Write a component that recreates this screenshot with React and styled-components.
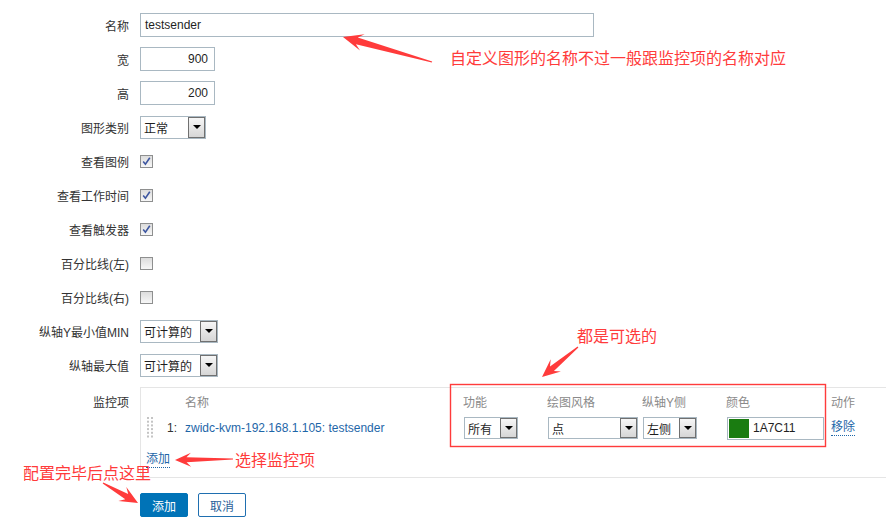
import React from 'react'
import styled, { createGlobalStyle } from 'styled-components'

const RED = '#ff3b3b'

const GlobalStyle = createGlobalStyle`
    html, body {
        margin: 0;
        padding: 0;
        background: #fff;
    }
    body {
        font-family: "Liberation Sans", Arial, "Noto Sans CJK SC", sans-serif;
        font-size: 12px;
        color: #333;
    }
`

// tapered annotation arrow: thin tail, wide swept head
const arrowPoints = (x1, y1, x2, y2, hl, hw, sw) => {
    const dx = x2 - x1
    const dy = y2 - y1
    const len = Math.hypot(dx, dy)
    const ux = dx / len
    const uy = dy / len
    const nx = -uy
    const ny = ux
    const jx = x2 - ux * hl * 0.72
    const jy = y2 - uy * hl * 0.72
    const bx = x2 - ux * hl
    const by = y2 - uy * hl
    return [
        [x1 + nx * 0.6, y1 + ny * 0.6],
        [jx + (nx * sw) / 2, jy + (ny * sw) / 2],
        [bx + (nx * hw) / 2, by + (ny * hw) / 2],
        [x2, y2],
        [bx - (nx * hw) / 2, by - (ny * hw) / 2],
        [jx - (nx * sw) / 2, jy - (ny * sw) / 2],
        [x1 - nx * 0.6, y1 - ny * 0.6],
    ]
        .map(p => p.map(v => v.toFixed(1)).join(','))
        .join(' ')
}

const arrows = [
    [432, 62, 343, 37, 20, 17, 7],
    [233, 459, 175, 460, 16, 14, 5],
    [103, 483, 138, 503, 18, 16, 6],
    [578, 347, 542, 377, 18, 16, 6],
]

const notes = [
    { x: 450, y: 49, text: '自定义图形的名称不过一般跟监控项的名称对应' },
    { x: 577, y: 327, text: '都是可选的' },
    { x: 235, y: 451, text: '选择监控项' },
    { x: 23, y: 464, text: '配置完毕后点这里' },
]

const Select = ({ value, width, height = 23 }) => (
    <SelectBox width={width} height={height}>
        <SelectText>{value}</SelectText>
        <SelectButton>
            <Caret />
        </SelectButton>
    </SelectBox>
)

const Checkbox = ({ checked }) => (
    <CheckBox>
        {checked && (
            <svg width="11" height="11" viewBox="0 0 11 11">
                <path d="M2.2 5.6 L4.4 8.2 L8.8 1.8" fill="none" stroke="#3d56a0" strokeWidth="1.6" />
            </svg>
        )}
    </CheckBox>
)

const DragHandle = () => (
    <svg width="7" height="22" viewBox="0 0 7 22">
        {[0, 1, 2, 3, 4, 5].map(r =>
            [0, 4].map(c => <rect key={`${r}-${c}`} x={c} y={r * 3.7} width="2" height="2" fill="#c4c4c4" />)
        )}
    </svg>
)

const App = () => {
    return (
        <Page>
            <GlobalStyle />
            <Form>
                <Row>
                    <Label>名称</Label>
                    <TextInput width={454}>testsender</TextInput>
                </Row>
                <Row>
                    <Label>宽</Label>
                    <TextInput width={75} right>900</TextInput>
                </Row>
                <Row>
                    <Label>高</Label>
                    <TextInput width={75} right>200</TextInput>
                </Row>
                <Row>
                    <Label>图形类别</Label>
                    <Select value="正常" width={66} />
                </Row>
                <Row>
                    <Label>查看图例</Label>
                    <Checkbox checked />
                </Row>
                <Row>
                    <Label>查看工作时间</Label>
                    <Checkbox checked />
                </Row>
                <Row>
                    <Label>查看触发器</Label>
                    <Checkbox checked />
                </Row>
                <Row>
                    <Label>百分比线(左)</Label>
                    <Checkbox />
                </Row>
                <Row>
                    <Label>百分比线(右)</Label>
                    <Checkbox />
                </Row>
                <Row>
                    <Label>纵轴Y最小值MIN</Label>
                    <Select value="可计算的" width={78} />
                </Row>
                <Row>
                    <Label>纵轴最大值</Label>
                    <Select value="可计算的" width={78} />
                </Row>
                <ItemsRow>
                    <Label top>监控项</Label>
                    <ItemsPanel>
                        <ItemsGrid>
                            <HeadCell />
                            <HeadCell />
                            <HeadCell>名称</HeadCell>
                            <HeadCell>功能</HeadCell>
                            <HeadCell>绘图风格</HeadCell>
                            <HeadCell>纵轴Y侧</HeadCell>
                            <HeadCell>颜色</HeadCell>
                            <HeadCell>动作</HeadCell>

                            <Cell><DragHandle /></Cell>
                            <Cell>1:</Cell>
                            <Cell><ItemLink>zwidc-kvm-192.168.1.105: testsender</ItemLink></Cell>
                            <Cell><Select value="所有" width={54} height={22} /></Cell>
                            <Cell><Select value="点" width={90} height={22} /></Cell>
                            <Cell><Select value="左侧" width={54} height={22} /></Cell>
                            <Cell>
                                <ColorInput>
                                    <Swatch color="#1A7C11" />
                                    1A7C11
                                </ColorInput>
                            </Cell>
                            <Cell><DottedLink>移除</DottedLink></Cell>
                        </ItemsGrid>
                        <AddRow>
                            <DottedLink>添加</DottedLink>
                        </AddRow>
                    </ItemsPanel>
                </ItemsRow>
                <ButtonRow>
                    <Spacer />
                    <Buttons>
                        <Button primary>添加</Button>
                        <Button>取消</Button>
                    </Buttons>
                </ButtonRow>
            </Form>

            <Overlay>
                <svg width="886" height="521" viewBox="0 0 886 521">
                    <rect x="450.5" y="384.5" width="375" height="62" fill="none" stroke={RED} strokeWidth="1.4" />
                    {arrows.map((a, i) => (
                        <polygon key={i} points={arrowPoints(...a)} fill={RED} />
                    ))}
                </svg>
                {notes.map(n => (
                    <Note key={n.text} style={{ left: n.x, top: n.y }}>{n.text}</Note>
                ))}
            </Overlay>
        </Page>
    )
}

export default App

const Page = styled.div`
    position: relative;
    width: 886px;
    height: 521px;
    overflow: hidden;
`

const Form = styled.div`
    display: flex;
    flex-direction: column;
    padding-top: 8px;
`

const Row = styled.div`
    display: grid;
    grid-template-columns: 130px 1fr;
    column-gap: 10px;
    height: 34px;
    align-items: center;
`

const Label = styled.div`
    text-align: right;
    white-space: nowrap;
    color: #333;
    align-self: ${props => (props.top ? 'start' : 'center')};
    padding-top: ${props => (props.top ? '6px' : '0')};
    padding-right: 1px;
`

const TextInput = styled.div`
    box-sizing: border-box;
    width: ${props => props.width}px;
    height: 24px;
    line-height: 22px;
    border: 1px solid #a9b8c2;
    padding: 0 6px 0 4px;
    text-align: ${props => (props.right ? 'right' : 'left')};
    color: #1f1f1f;
`

const SelectBox = styled.div`
    box-sizing: border-box;
    width: ${props => props.width}px;
    height: ${props => props.height}px;
    border: 1px solid #a9b8c2;
    display: flex;
    align-items: stretch;
    justify-content: space-between;
    background: #fff;
`

const SelectText = styled.span`
    display: flex;
    align-items: center;
    padding-left: 3px;
    color: #1f1f1f;
    white-space: nowrap;
`

const SelectButton = styled.span`
    box-sizing: border-box;
    width: 17px;
    margin: 0 0 0 0;
    border: 1px solid #707070;
    background: linear-gradient(#f6f6f6, #d6d6d6);
    display: flex;
    align-items: center;
    justify-content: center;
`

const Caret = styled.span`
    width: 0;
    height: 0;
    border-left: 4px solid transparent;
    border-right: 4px solid transparent;
    border-top: 4px solid #000;
`

const CheckBox = styled.span`
    box-sizing: border-box;
    width: 13px;
    height: 13px;
    border: 1px solid #8e8f8f;
    background: linear-gradient(#dcdcdc, #f7f7f7);
    display: flex;
    align-items: center;
    justify-content: center;
`

const ItemsRow = styled.div`
    display: grid;
    grid-template-columns: 130px 1fr;
    column-gap: 10px;
    margin-top: 5px;
`

const ItemsPanel = styled.div`
    border-top: 1px solid #e5e5e5;
    border-left: 1px solid #e5e5e5;
    border-bottom: 1px solid #e5e5e5;
    padding-left: 6px;
`

const ItemsGrid = styled.div`
    display: grid;
    grid-template-columns: 20px 18px 278px 84px 95px 84px 105px 1fr;
    grid-template-rows: 26px 28px;
    align-items: center;
`

const HeadCell = styled.div`
    color: #8a8a8a;
    white-space: nowrap;
`

const Cell = styled.div`
    display: flex;
    align-items: center;
    white-space: nowrap;
    color: #333;
    padding-left: ${props => (props.pad ? props.pad : 0)}px;

    & > div {
        margin-left: 1px;
    }
`

const ItemLink = styled.span`
    color: #1e66a8;
`

const DottedLink = styled.span`
    color: #1e66a8;
    border-bottom: 1px dotted #1e66a8;
    line-height: 15px;
`

const ColorInput = styled.div`
    box-sizing: border-box;
    width: 97px;
    height: 23px;
    border: 1px solid #a9b8c2;
    display: flex;
    align-items: center;
    gap: 4px;
    padding-left: 1px;
    color: #1f1f1f;
`

const Swatch = styled.span`
    width: 20px;
    height: 19px;
    background: ${props => props.color};
`

const AddRow = styled.div`
    height: 35px;
    display: flex;
    align-items: center;
    margin-left: -1px;
`

const ButtonRow = styled.div`
    display: grid;
    grid-template-columns: 130px 1fr;
    column-gap: 10px;
    margin-top: 15px;
`

const Spacer = styled.div``

const Buttons = styled.div`
    display: flex;
    gap: 10px;
`

const Button = styled.button`
    box-sizing: border-box;
    width: 48px;
    height: 24px;
    padding: 0;
    font: inherit;
    font-size: 12px;
    border-radius: 2px;
    border: 1px solid ${props => (props.primary ? '#0073b7' : '#1f6fb0')};
    background: ${props => (props.primary ? '#0073b7' : '#fff')};
    color: ${props => (props.primary ? '#fff' : '#2a5f99')};
`

const Overlay = styled.div`
    position: absolute;
    inset: 0;
    pointer-events: none;

    & > svg {
        position: absolute;
        left: 0;
        top: 0;
    }
`

const Note = styled.span`
    position: absolute;
    font-family: "Noto Sans CJK SC", sans-serif;
    font-size: 16px;
    line-height: 16px;
    color: ${RED};
    white-space: nowrap;
`
